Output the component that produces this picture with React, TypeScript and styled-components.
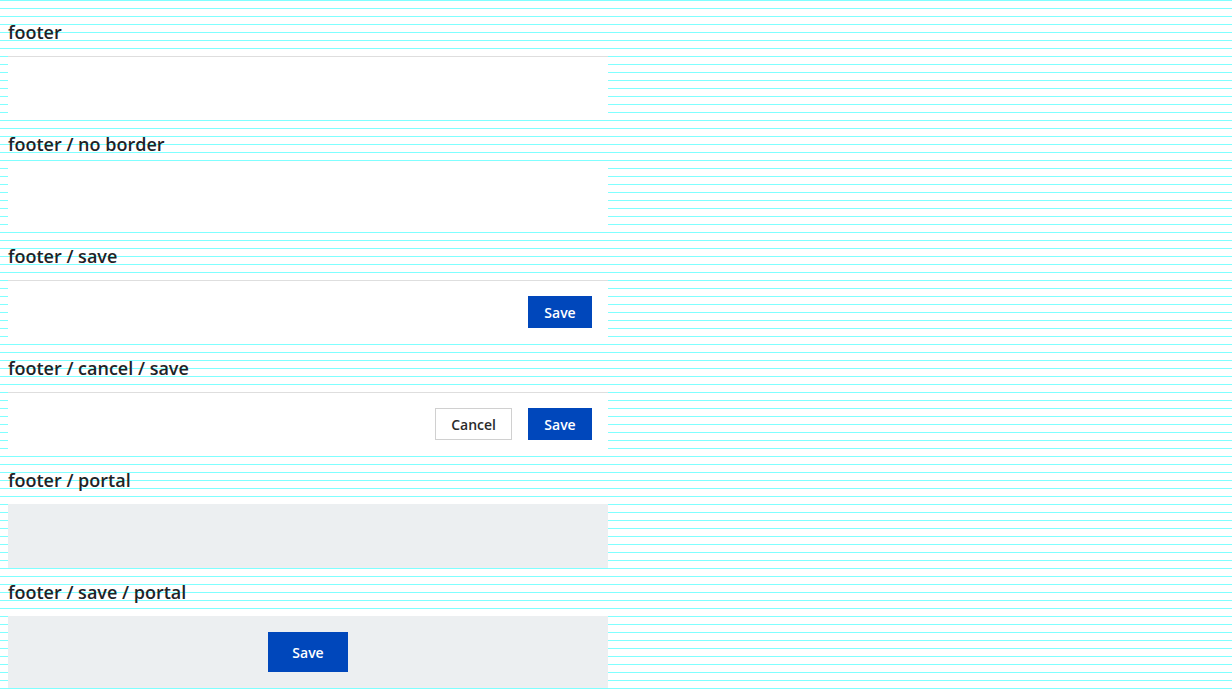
import { createGlobalStyle, styled } from "styled-components";

const GlobalStyle = createGlobalStyle`
  html {
    min-height: 100%;
    background: repeating-linear-gradient(
      to bottom,
      #80ffff 0px,
      #80ffff 1px,
      #ffffff 1px,
      #ffffff 8px
    );
  }

  body {
    margin: 0;
    padding: 8px 8px 0;
    font-family: "Open Sans", "Noto Sans", sans-serif;
  }
`;

type Variant = "border" | "plain" | "portal";

export default function App() {
  return (
    <>
      <GlobalStyle />
      <Page>
        <Story>
          <Label>footer</Label>
          <Footer $variant="border" />
        </Story>
        <Story>
          <Label>footer / no border</Label>
          <Footer $variant="plain" />
        </Story>
        <Story>
          <Label>footer / save</Label>
          <Footer $variant="border">
            <Button $primary>Save</Button>
          </Footer>
        </Story>
        <Story>
          <Label>footer / cancel / save</Label>
          <Footer $variant="border">
            <Button>Cancel</Button>
            <Button $primary>Save</Button>
          </Footer>
        </Story>
        <Story>
          <Label>footer / portal</Label>
          <Footer $variant="portal" />
        </Story>
        <Story>
          <Label>footer / save / portal</Label>
          <Footer $variant="portal" $center $tall>
            <Button $primary $large>
              Save
            </Button>
          </Footer>
        </Story>
      </Page>
    </>
  );
}

const Page = styled.div`
  width: 600px;
  display: flex;
  flex-direction: column;
`;

const Story = styled.section`
  display: flex;
  flex-direction: column;
  padding-top: 12px;
`;

const Label = styled.h3`
  margin: 0 0 12px;
  font-size: 18px;
  line-height: 24px;
  font-weight: 600;
  color: #1f2326;
`;

const Footer = styled.div<{ $variant: Variant; $center?: boolean; $tall?: boolean }>`
  box-sizing: border-box;
  height: ${(p) => (p.$tall ? "72px" : "64px")};
  padding: ${(p) => (p.$variant === "portal" ? "0 16px" : "0 16px 1px")};
  display: flex;
  align-items: center;
  justify-content: ${(p) => (p.$center ? "center" : "flex-end")};
  gap: 16px;
  background-color: ${(p) => (p.$variant === "portal" ? "#eceff1" : "#ffffff")};
  border-top: ${(p) =>
    p.$variant === "border"
      ? "1px solid #dedede"
      : p.$variant === "plain"
        ? "1px solid transparent"
        : "none"};
`;

const Button = styled.button<{ $primary?: boolean; $large?: boolean }>`
  box-sizing: border-box;
  height: ${(p) => (p.$large ? "40px" : "32px")};
  min-width: ${(p) => (p.$large ? "80px" : "64px")};
  padding: 0 15px;
  font-family: "Open Sans", "Noto Sans", sans-serif;
  font-size: 14px;
  font-weight: 600;
  border-radius: 0;
  cursor: pointer;
  color: ${(p) => (p.$primary ? "#ffffff" : "#2b2b2b")};
  background-color: ${(p) => (p.$primary ? "#0047bb" : "#ffffff")};
  border: 1px solid ${(p) => (p.$primary ? "#0047bb" : "#d0d0d0")};
`;
